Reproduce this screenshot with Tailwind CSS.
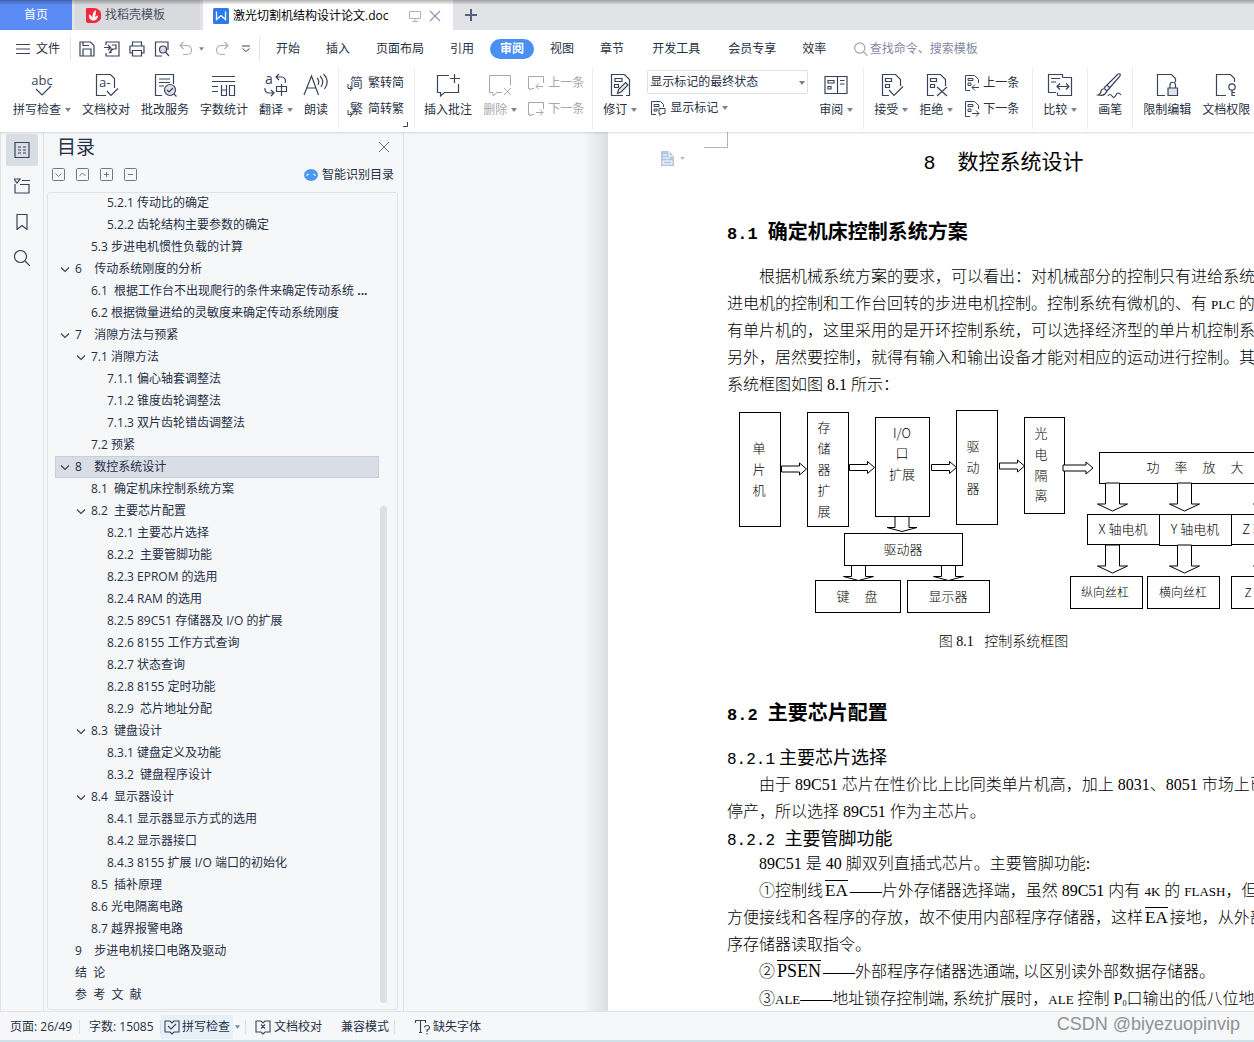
<!DOCTYPE html>
<html lang="zh-CN">
<head>
<meta charset="utf-8">
<meta name="viewport" content="width=device-width, initial-scale=1">
<title>激光切割机结构设计论文.doc</title>
<script src="https://cdn.jsdelivr.net/npm/@tailwindcss/browser@4"></script>
</head>
<body class="h-screen overflow-hidden flex flex-col bg-[#f5f7f9] text-[12px] leading-4 text-[#262f45] font-['Open_Sans','Noto_Sans_CJK_SC',sans-serif] whitespace-nowrap">

<!-- shared icons -->
<svg class="hidden" aria-hidden="true">
  <symbol id="caret" viewBox="0 0 6 4"><path d="M0 0h6L3 4z" fill="#79839b"/></symbol>
  <symbol id="chev" viewBox="0 0 10 10"><path d="M1 3.500l4 4 4-4" fill="none" stroke="#3b4458" stroke-width="1.200"/></symbol>
  <symbol id="doc" viewBox="0 0 24 24"><path d="M10 22.500H3.500V1.500h13l5 5V13M6.500 5.500h6v3h-6zM6.500 11.500h4v3h-4z"/></symbol>
</svg>

<!-- tabs -->
<header class="relative h-[30px] shrink-0 flex bg-[#e1e3e7] overflow-hidden">
  <button class="w-[72px] bg-[#5b8cf6] text-white">首页</button>
  <button class="ml-[3px] w-[125px] bg-[#d8dade] flex items-center pl-[11px] gap-1 text-[#4a5060]">
    <svg class="size-[15px]" viewBox="0 0 15 15"><path d="M1 0h7a7.500 7.500 0 0 1 0 15H2a2 2 0 0 1-2-2V1a1 1 0 0 1 1-1z" fill="#f0293e"/><path d="M7 12.500C4 12 2.500 9.500 3 6.500c2 .5 3 2 3.500 4C6 7 7 4 9.500 2c1 3 0 6-1.500 8.500 1-2 2.500-3 4-3 0 3-2 5-5 5z" fill="#fff"/></svg>
    找稻壳模板
  </button>
  <div class="ml-[3px] w-[250px] bg-white flex items-center pl-[10px] pt-px text-black">
    <svg class="size-4 mr-1" viewBox="0 0 16 16"><rect width="16" height="16" rx="1.500" fill="#2c7be8"/><path d="M3.500 3.500v8L8 7.500l4.500 4v-8" fill="none" stroke="#fff" stroke-width="1.300"/></svg>
    <span>激光切割机结构设计论文.doc</span>
    <svg class="size-[12px] ml-[21px]" viewBox="0 0 12 12" fill="none" stroke="#a9b3cb"><path d="M.5 1.500h11v7H.5zM6 8.500v2.500M3 11.500h6"/></svg>
    <button class="ml-2" aria-label="关闭标签"><svg class="size-[12px]" viewBox="0 0 12 12" stroke="#8c98b5" stroke-width="1.200"><path d="M1 1l10 10M11 1L1 11"/></svg></button>
  </div>
  <button class="ml-3" aria-label="新建标签"><svg class="size-[12px]" viewBox="0 0 12 12" stroke="#56617d" stroke-width="2"><path d="M6 0v12M0 6h12"/></svg></button>
  <div class="absolute inset-x-0 top-0 h-[5px] bg-gradient-to-b from-black/30 to-transparent"></div>
</header>

<!-- menu bar -->
<nav class="h-[37px] shrink-0 flex items-center bg-white pl-4 pt-px">
  <button class="flex items-center gap-1.5"><svg class="size-[14px]" viewBox="0 0 14 14" stroke="#39435a" stroke-width="1.200"><path d="M0 2.500h14M0 7h14M0 11.500h14"/></svg>文件</button>
  <i class="w-px h-6 bg-[#e2e4e8] ml-[10px] mr-2"></i>
  <div class="flex items-center gap-[9px]">
    <button aria-label="保存"><svg class="size-4" viewBox="0 0 16 16" fill="none" stroke="#39435a" stroke-width="1.200"><path d="M1 1h10.500L15 4.500V15H1zM4 15V8h8v7M4 1v3.500h6"/></svg></button>
    <button aria-label="输出为PDF"><svg class="size-4" viewBox="0 0 16 16" fill="none" stroke="#39435a" stroke-width="1.200"><path d="M2 4V1h13v14H2v-3M0 6.500h6M4 4l2.500 2.500L4 9M8 4h4v4H7v4M5 12l4-4"/></svg></button>
    <button aria-label="打印"><svg class="size-4" viewBox="0 0 16 16" fill="none" stroke="#39435a" stroke-width="1.200"><path d="M3.500 5V1h9v4M3.500 12H1V5h14v7h-2.500M3.500 9.500h9V15h-9z"/></svg></button>
    <button aria-label="打印预览"><svg class="size-4" viewBox="0 0 16 16" fill="none" stroke="#39435a" stroke-width="1.200"><path d="M8 15H1.500V1H14v8"/><circle cx="9" cy="8.500" r="3.500" fill="#d9dde5"/><path d="M11.500 11l3.500 4"/></svg></button>
    <button aria-label="撤销" class="flex items-center gap-1.5"><svg class="size-[14px]" viewBox="0 0 14 14" fill="none" stroke="#a9adb6" stroke-width="1.200"><path d="M4.500 0L1 3.500 4.500 7M1 3.500h7a4.500 4.500 0 0 1 0 9H4"/></svg><svg class="w-[5px] h-1"><use href="#caret"/></svg></button>
    <button aria-label="重做" class="ml-0.5"><svg class="size-[14px]" viewBox="0 0 14 14" fill="none" stroke="#a9adb6" stroke-width="1.200"><path d="M9.500 0L13 3.500 9.500 7M13 3.500H6a4.500 4.500 0 0 0 0 9h4"/></svg></button>
    <button aria-label="更多" class="ml-1"><svg class="size-2" viewBox="0 0 8 8" fill="none" stroke="#39435a"><path d="M0 1h8M.5 3.500L4 6.500 7.500 3.500"/></svg></button>
  </div>
  <i class="w-px h-6 bg-[#e2e4e8] ml-[9px] mr-4"></i>
  <div class="flex items-center gap-[26px]">
    <button>开始</button><button>插入</button><button>页面布局</button><button>引用</button>
    <button class="-mx-[10px] px-[10px] h-5 rounded-full bg-[#4990f2] text-white font-bold">审阅</button>
    <button>视图</button><button>章节</button><button class="mx-0.5">开发工具</button><button>会员专享</button><button>效率</button>
  </div>
  <label class="flex items-center gap-0.5 ml-7 flex-1">
    <svg class="size-[14px]" viewBox="0 0 14 14" fill="none" stroke="#9aa4ba" stroke-width="1.200"><circle cx="6" cy="6" r="5.300"/><path d="M10 10l4 4"/></svg>
    <input type="text" aria-label="查找命令" placeholder="查找命令、搜索模板" class="w-full outline-none placeholder:text-[#7f89a3]">
  </label>
</nav>

<!-- ribbon -->
<section class="relative z-10 h-[65px] shrink-0 flex gap-[11px] pl-[13px] bg-white shadow-[0_1px_2px_rgba(0,0,0,0.15)]
  [&>i]:w-px [&>i]:h-[61px] [&>i]:mt-px [&>i]:-mx-px [&>i]:bg-[#ebecef] [&>i]:shrink-0
  [&>button]:pt-[6px] [&>button]:flex [&>button]:flex-col [&>button]:items-center [&>button]:gap-[5px] [&>button]:self-start [&>button]:shrink-0
  [&>button>span]:flex [&>button>span]:items-center [&>button>span]:gap-1
  [&>div]:shrink-0 [&_svg]:fill-none [&_svg]:stroke-[#39435a] [&_svg]:overflow-visible">
  <button><svg class="size-6" viewBox="0 0 24 24"><text x="12" y="12" text-anchor="middle" font-size="13" stroke="none" fill="#39435a">abc</text><path d="M6 16l6 6 9-9" stroke-width="1.200"/></svg><span>拼写检查<svg class="w-1.5 h-1"><use href="#caret" stroke="none"/></svg></span></button>
  <button><svg class="size-6" viewBox="0 0 24 24" stroke-width="1.200"><path d="M12 22.500H2.500V1.500h14l4 4V15M13 18l4 4.500 7-7"/><text x="5" y="14" font-size="13" stroke="none" fill="#39435a">a-</text></svg><span>文档校对</span></button>
  <button><svg class="size-6" viewBox="0 0 24 24" stroke-width="1.200"><path d="M9 22.500H2.500V1.500h18V11M6 6h11M6 9.500h11M6 13h5"/><circle cx="17" cy="17" r="5.500" fill="#dfe3e9"/><path d="M14 17l2 2 4-4M21 21l2.500 2.500"/></svg><span>批改服务</span></button>
  <button><svg class="size-6" viewBox="0 0 24 24" stroke-width="1.200"><path d="M0 3.500h23M0 8.500h23M0 13.500h6M0 18.500h6M9.500 12v10.500h5V12M9.500 17h5M17.500 12.500h5v10h-5z"/></svg><span>字数统计</span></button>
  <button><svg class="size-6" viewBox="0 0 24 24" stroke-width="1.200"><text x="1" y="11" font-size="14" stroke="none" fill="#39435a">a</text><path d="M15 1l-3 3 3 3M12 4h6a4 4 0 0 1 3 6M7 23l3-3-3-3M10 20H5a4 4 0 0 1-4-5M12.500 13.500h10v5h-10zM17.500 11v12"/></svg><span>翻译<svg class="w-1.5 h-1"><use href="#caret" stroke="none"/></svg></span></button>
  <button><svg class="size-6" viewBox="0 0 24 24" stroke-width="1.200"><path d="M0 22L7.500 3l7 19M3 15h9M13 5q3 3 1 7M16 3q5 5 1 11M19.500 1q7 7 1 15"/></svg><span>朗读</span></button>
  <i></i>
  <div class="relative -ml-0.5 pt-[3px]">
    <button class="h-[26px] flex items-center gap-[5px]"><svg class="size-4" viewBox="0 0 16 16"><text x="3" y="12" font-size="13" stroke="none" fill="#39435a">简</text><path d="M1 9v4.500h4M3 11l2 2.500-2 2.500"/></svg>繁转简</button>
    <button class="h-[26px] flex items-center gap-[5px]"><svg class="size-4" viewBox="0 0 16 16"><text x="3" y="12" font-size="13" stroke="none" fill="#39435a">繁</text><path d="M1 9v4.500h4M3 11l2 2.500-2 2.500"/></svg>简转繁</button>
    <svg class="absolute -right-1 bottom-[5px] size-[5px]" viewBox="0 0 5 5"><path d="M4.500 0v4.500H0"/></svg>
  </div>
  <i></i>
  <button class="-ml-px"><svg class="size-6" viewBox="0 0 24 24" stroke-width="1.200"><path d="M13 2.500H1.500v17h3V23l4-3.500h14V11M14 5.500h10M18.500 1v9"/></svg><span>插入批注</span></button>
  <button class="text-[#a3a7b0]"><svg class="size-6" viewBox="0 0 24 24"><path d="M14 19.500H9L5 23v-3.500H1.500v-17h21V12M16 15l7 7M23 15l-7 7" stroke="#a3a7b0"/></svg><span>删除<svg class="w-1.5 h-1"><use href="#caret" stroke="none"/></svg></span></button>
  <div class="pt-[3px] -mr-0.5 text-[#a3a7b0]">
    <button class="h-[26px] flex items-center gap-1"><svg class="size-4" viewBox="0 0 16 16"><path d="M6 13.500H4L2 15v-1.500H.5v-12h15V8M15 11.500H8M11 8.500l-3 3 3 3" stroke="#a3a7b0"/></svg>上一条</button>
    <button class="h-[26px] flex items-center gap-1"><svg class="size-4" viewBox="0 0 16 16"><path d="M6 13.500H4L2 15v-1.500H.5v-12h15V8M8 11.500h7M12 8.500l3 3-3 3" stroke="#a3a7b0"/></svg>下一条</button>
  </div>
  <i></i>
  <button><svg class="size-6" viewBox="0 0 24 24" stroke-width="1.200"><path d="M15 22.500H3.500V1.500h13l5 5v16H18M7 5.500h7v3H7zM6.500 11.500h4v3h-4z"/><path d="M9.500 20.500l1-4 7-7 2.500 2.500-7 7z" fill="#e9ebef"/></svg><span>修订<svg class="w-1.5 h-1"><use href="#caret" stroke="none"/></svg></span></button>
  <div class="pt-[3px] -ml-px">
    <div class="relative">
      <select aria-label="显示状态" class="block appearance-none w-[161px] h-6 border border-[#dcdfe4] rounded-[2px] bg-white pl-0.5 text-[#262f45]"><option>显示标记的最终状态</option></select>
      <svg class="absolute right-[3px] top-[11px] w-1.5 h-1 pointer-events-none"><use href="#caret" stroke="none"/></svg>
    </div>
    <button class="h-[28px] ml-[3px] flex items-center gap-1"><svg class="size-4" viewBox="0 0 16 16"><path d="M6 14.500H1.500V1.500h9l3 3V7M4 4.500h5v2H4zM4 9h3v2H4zM9 8.500h6v5h-3l-2 2v-2H9z"/></svg>显示标记<svg class="w-1.5 h-1"><use href="#caret" stroke="none"/></svg></button>
  </div>
  <button><svg class="size-6" viewBox="0 0 24 24" stroke-width="1.200"><path d="M1 3.500h22v17H1zM13.500 3.500v17M4 7.500h6v2.500H4zM4 13.500h3v2.500H4zM16 7.500h4.500M16 11h4.500"/></svg><span>审阅<svg class="w-1.5 h-1"><use href="#caret" stroke="none"/></svg></span></button>
  <i></i>
  <button><svg class="size-6" viewBox="0 0 24 24" stroke-width="1.200"><use href="#doc"/><path d="M10 17l5 5.500 9-9"/></svg><span>接受<svg class="w-1.5 h-1"><use href="#caret" stroke="none"/></svg></span></button>
  <button><svg class="size-6" viewBox="0 0 24 24" stroke-width="1.200"><use href="#doc"/><path d="M13 14l10 9M23 14l-10 9"/></svg><span>拒绝<svg class="w-1.5 h-1"><use href="#caret" stroke="none"/></svg></span></button>
  <div class="pt-[3px] mr-[3px]">
    <button class="h-[26px] flex items-center gap-[3px]"><svg class="size-4" viewBox="0 0 16 16"><path d="M6 15.500H1.500v-15h9l4 4V8M4 3.500h5v2H4zM4 8h3v2.500H4zM15 12.500H8M11 9.500l-3 3 3 3"/></svg>上一条</button>
    <button class="h-[26px] flex items-center gap-[3px]"><svg class="size-4" viewBox="0 0 16 16"><path d="M6 15.500H1.500v-15h9l4 4V8M4 3.500h5v2H4zM4 8h3v2.500H4zM8 12.500h7M12 9.500l3 3-3 3"/></svg>下一条</button>
  </div>
  <i></i>
  <button><svg class="size-6" viewBox="0 0 24 24" stroke-width="1.200"><path d="M8 19.500H.5v-18h14v3M3 5.500h9M3 9h5M9.500 22.500h14v-18h-9M9.500 22.500V19.500M9 13.500h12M12 10.500l-3 3 3 3M18 10.500l3 3-3 3"/></svg><span>比较<svg class="w-1.5 h-1"><use href="#caret" stroke="none"/></svg></span></button>
  <i></i>
  <button><svg class="size-6" viewBox="0 0 24 24" stroke-width="1.200"><path d="M0 22q3-1 3-4 1-3 4-2 3 2 0 5-2 2-7 1zM6 15L20 1q3-1 2 2L9 18M9 12l3 3M10 23q2-3 4 0t4-1 5 0"/></svg><span>画笔</span></button>
  <i></i>
  <button><svg class="size-6" viewBox="0 0 24 24" stroke-width="1.200"><path d="M10 22.500H2.500V1.500h14l4 4V9"/><path d="M13 15h9.500v7.500H13z" fill="#dfe3e9"/><path d="M15 15v-3a2.700 2.700 0 0 1 5.500 0v3"/></svg><span>限制编辑</span></button>
  <button><svg class="size-6" viewBox="0 0 24 24" stroke-width="1.200"><path d="M12 22.500H2.500V1.500h14l4 4V9"/><circle cx="18" cy="14" r="3.200"/><path d="M18 17v6M18 19.500h3M18 22.500h3"/></svg><span>文档权限</span></button>
</section>

<main class="flex-1 min-h-0 flex overflow-hidden">
  <!-- side rail -->
  <aside class="w-11 shrink-0 border-x border-[#e0e3e8] pl-[5px] pt-0.5 flex flex-col gap-1 [&>button]:size-8 [&>button]:flex [&>button]:items-center [&>button]:justify-center [&_svg]:fill-none [&_svg]:stroke-[#39435a]">
    <button class="bg-[#d9dee5] rounded-[2px]" aria-label="目录"><svg class="size-4" viewBox="0 0 16 16" stroke-width="1.200"><path d="M1 .5h14v15H1zM4 5h3M9 5h3M4 8h3M9 8h3M4 11h3M9 11h3"/></svg></button>
    <button aria-label="章节"><svg class="size-4" viewBox="0 0 16 16" stroke-width="1.200"><path d="M0 1h6L3 5zM8 2.500h8M1 6v9h14V6.500H6"/></svg></button>
    <button aria-label="书签"><svg class="size-4" viewBox="0 0 16 16" stroke-width="1.200"><path d="M3 .5h10v15l-5-4-5 4z"/></svg></button>
    <button aria-label="查找"><svg class="size-4" viewBox="0 0 16 16" stroke-width="1.200"><circle cx="6.500" cy="6.500" r="6"/><path d="M11 11l5 5"/></svg></button>
  </aside>

  <!-- contents panel -->
  <section class="w-[360px] shrink-0 border-r border-[#e0e3e8] flex flex-col pl-[3px] pr-[5px]">
    <div class="flex items-center justify-between h-[30px] pl-[10px] pr-[9px]">
      <h2 class="text-[19px] leading-[30px]">目录</h2>
      <button aria-label="关闭"><svg class="size-[10px]" viewBox="0 0 10 10" stroke="#6b7385"><path d="M0 0l10 10M10 0L0 10"/></svg></button>
    </div>
    <div class="flex items-center h-6 pl-[5px] pr-1 gap-[11px] [&>button>svg]:size-[13px] [&>button>svg]:fill-none [&>button>svg]:stroke-[#6f7787]">
      <button aria-label="展开"><svg viewBox="0 0 13 13"><rect x=".5" y=".5" width="12" height="12" rx="1"/><path d="M3.500 5.500l3 3 3-3"/></svg></button>
      <button aria-label="收起"><svg viewBox="0 0 13 13"><rect x=".5" y=".5" width="12" height="12" rx="1"/><path d="M3.500 8l3-3 3 3"/></svg></button>
      <button aria-label="增加"><svg viewBox="0 0 13 13"><rect x=".5" y=".5" width="12" height="12" rx="1"/><path d="M4 6.500h5M6.500 4v5"/></svg></button>
      <button aria-label="减少"><svg viewBox="0 0 13 13"><rect x=".5" y=".5" width="12" height="12" rx="1"/><path d="M4 6.500h5"/></svg></button>
      <a href="#" class="ml-auto pt-px flex items-center gap-1"><svg class="w-[14px] h-3" viewBox="0 0 14 12"><ellipse cx="7" cy="6" rx="7" ry="6" fill="#4c97f0"/><path d="M2.500 6.500l2-1.500M11.500 6.500l-2-1.500" stroke="#fff" stroke-width="1.300"/></svg>智能识别目录</a>
    </div>
    <div class="relative mt-[6px] mb-px flex-1 min-h-0 overflow-hidden border border-[#dfe2e7] rounded-[3px] pl-[7px] pr-[18px]">
      <ul class="-mt-px [&_a]:flex [&_a]:items-center [&_a]:h-[22px] [&_a]:whitespace-pre [&_svg]:size-[10px] [&_svg]:mr-[5px]">
        <li><a href="#" class="pl-[52px]">5.2.1 传动比的确定</a></li>
        <li><a href="#" class="pl-[52px]">5.2.2 齿轮结构主要参数的确定</a></li>
        <li><a href="#" class="pl-[36px]">5.3 步进电机惯性负载的计算</a></li>
        <li><a href="#" class="pl-[5px]"><svg><use href="#chev"/></svg>6    传动系统刚度的分析</a></li>
        <li><a href="#" class="pl-[36px]">6.1  根据工作台不出现爬行的条件来确定传动系统 <b>...</b></a></li>
        <li><a href="#" class="pl-[36px]">6.2 根据微量进给的灵敏度来确定传动系统刚度</a></li>
        <li><a href="#" class="pl-[5px]"><svg><use href="#chev"/></svg>7    消隙方法与预紧</a></li>
        <li><a href="#" class="pl-[21px]"><svg><use href="#chev"/></svg>7.1 消隙方法</a></li>
        <li><a href="#" class="pl-[52px]">7.1.1 偏心轴套调整法</a></li>
        <li><a href="#" class="pl-[52px]">7.1.2 锥度齿轮调整法</a></li>
        <li><a href="#" class="pl-[52px]">7.1.3 双片齿轮错齿调整法</a></li>
        <li><a href="#" class="pl-[36px]">7.2 预紧</a></li>
        <li><a href="#" class="pl-[5px] bg-[#d9dde5] outline outline-[#c6d0d9] -outline-offset-1" aria-current="true"><svg><use href="#chev"/></svg>8    数控系统设计</a></li>
        <li><a href="#" class="pl-[36px]">8.1  确定机床控制系统方案</a></li>
        <li><a href="#" class="pl-[21px]"><svg><use href="#chev"/></svg>8.2  主要芯片配置</a></li>
        <li><a href="#" class="pl-[52px]">8.2.1 主要芯片选择</a></li>
        <li><a href="#" class="pl-[52px]">8.2.2  主要管脚功能</a></li>
        <li><a href="#" class="pl-[52px]">8.2.3 EPROM 的选用</a></li>
        <li><a href="#" class="pl-[52px]">8.2.4 RAM 的选用</a></li>
        <li><a href="#" class="pl-[52px]">8.2.5 89C51 存储器及 I/O 的扩展</a></li>
        <li><a href="#" class="pl-[52px]">8.2.6 8155 工作方式查询</a></li>
        <li><a href="#" class="pl-[52px]">8.2.7 状态查询</a></li>
        <li><a href="#" class="pl-[52px]">8.2.8 8155 定时功能</a></li>
        <li><a href="#" class="pl-[52px]">8.2.9  芯片地址分配</a></li>
        <li><a href="#" class="pl-[21px]"><svg><use href="#chev"/></svg>8.3  键盘设计</a></li>
        <li><a href="#" class="pl-[52px]">8.3.1 键盘定义及功能</a></li>
        <li><a href="#" class="pl-[52px]">8.3.2  键盘程序设计</a></li>
        <li><a href="#" class="pl-[21px]"><svg><use href="#chev"/></svg>8.4  显示器设计</a></li>
        <li><a href="#" class="pl-[52px]">8.4.1 显示器显示方式的选用</a></li>
        <li><a href="#" class="pl-[52px]">8.4.2 显示器接口</a></li>
        <li><a href="#" class="pl-[52px]">8.4.3 8155 扩展 I/O 端口的初始化</a></li>
        <li><a href="#" class="pl-[36px]">8.5  插补原理</a></li>
        <li><a href="#" class="pl-[36px]">8.6 光电隔离电路</a></li>
        <li><a href="#" class="pl-[36px]">8.7 越界报警电路</a></li>
        <li><a href="#" class="pl-[20px]">9    步进电机接口电路及驱动</a></li>
        <li><a href="#" class="pl-[20px]">结  论</a></li>
        <li><a href="#" class="pl-[20px]">参  考  文  献</a></li>
      </ul>
      <div class="absolute right-[10px] bottom-[6px] w-[7px] h-[497px] rounded-full bg-[#dde1e5]"></div>
    </div>
  </section>

  <!-- document -->
  <div class="flex-1 min-w-0 overflow-hidden flex">
    <div class="w-[204px] shrink-0 bg-gradient-to-r from-[#f5f7f9] from-88% to-[#dcdee1]"></div>
    <article class="relative w-[791px] shrink-0 bg-white px-[119px] text-black text-[16px] leading-[27px] font-['Liberation_Serif','Noto_Sans_CJK_SC',serif] font-light">
      <div class="absolute left-[96px] top-0 w-6 h-4 border-r border-b border-[#b5b5b5]"></div>
      <button class="absolute left-[53px] top-[19px] flex items-center gap-1.5" aria-label="段落布局">
        <svg class="w-[13px] h-[15px]" viewBox="0 0 13 15"><path d="M0 0h8l5 5v10H0z" fill="#b3c8e4"/><path d="M8 0v5h5M2 4h4M2 7h7M2 10h9v3H2z" fill="none" stroke="#fff"/></svg>
        <svg class="w-[5px] h-[3px]" viewBox="0 0 6 4"><path d="M0 0h6L3 4z" fill="#b4b4b4"/></svg>
      </button>
      <h1 class="pt-[13px] leading-[30px] text-[21px] text-center font-['Noto_Sans_CJK_SC',sans-serif] font-normal"><span class="mr-[22px] text-[20px] leading-none font-['Liberation_Mono',monospace]">8</span>数控系统设计</h1>
      <h2 class="mt-[41px] leading-[30px] text-[20px] font-bold font-['Noto_Sans_CJK_SC',sans-serif]"><span class="text-[17px] leading-none font-['Liberation_Mono',monospace]">8.1 </span>确定机床控制系统方案</h2>
      <p class="mt-[17px] indent-8">根据机械系统方案的要求，可以看出：对机械部分的控制只有进给系统的<br>进电机的控制和工作台回转的步进电机控制。控制系统有微机的、有 <span class="text-[13px] leading-none">PLC</span> 的、<br>有单片机的，这里采用的是开环控制系统，可以选择经济型的单片机控制系<br>另外，居然要控制，就得有输入和输出设备才能对相应的运动进行控制。其控<br>系统框图如图 8.1 所示：</p>
      <svg class="mt-0.5 w-[553px] h-[220px]" viewBox="727 400 553 220" font-size="13" text-anchor="middle" font-family="'Noto Sans CJK SC',sans-serif" role="img" aria-label="控制系统框图">
        <defs>
          <path id="down" d="M-7 0V21H-15L0 28 15 21H7V0z"/>
          <path id="short" d="M-7 0V11H-15L0 15 15 11H7V0z"/>
          <path id="right" d="M0-3H18V-6L25 0 18 6V3H0z"/>
        </defs>
        <g fill="#fff" stroke="#000" shape-rendering="crispEdges">
          <path d="M739.500 412.500h41v114h-41zM807.500 412.500h41v114h-41zM875.500 417.500h54v99h-54zM956.500 410.500h41v114h-41zM1024.500 417.500h40v96h-40zM1099.500 452.500h180v31h-180zM844.500 533.500h118v32h-118zM815.500 580.500h85v32h-85zM907.500 580.500h82v32h-82zM1087.500 514.500h72v30h-72zM1159.500 514.500h72v31h-72zM1231.500 514.500h48v30h-48zM1070.500 576.500h72v32h-72zM1147.500 576.500h72v32h-72zM1231.500 576.500h48v32h-48z"/>
        </g>
        <g fill="#fff" stroke="#000">
          <use href="#right" x="781.500" y="469"/><use href="#right" x="849.500" y="467.500"/><use href="#right" x="931.500" y="467.500"/><use href="#right" x="999.500" y="466"/>
          <path d="M1063 465h23v-3l7 6-7 6v-3h-23z"/>
          <use href="#short" x="902" y="516.500"/><use href="#short" x="858.500" y="565.500"/><use href="#short" x="948.500" y="565.500"/>
          <use href="#down" x="1112.500" y="483"/><use href="#down" x="1184.500" y="483"/><use href="#down" x="1268.500" y="483"/>
          <use href="#down" x="1112.500" y="545"/><use href="#down" x="1184.500" y="545"/><use href="#down" x="1268.500" y="545"/>
        </g>
        <text x="759" y="453">单</text><text x="759" y="474">片</text><text x="759" y="495">机</text>
        <text x="824" y="432">存</text><text x="824" y="453">储</text><text x="824" y="474">器</text><text x="824" y="495">扩</text><text x="824" y="516">展</text>
        <text x="902" y="438">I/O</text><text x="902" y="458">口</text><text x="902" y="479">扩展</text>
        <text x="973" y="451">驱</text><text x="973" y="472">动</text><text x="973" y="493">器</text>
        <text x="1041" y="438">光</text><text x="1041" y="459">电</text><text x="1041" y="480">隔</text><text x="1041" y="500">离</text>
        <text x="1153" y="472">功</text><text x="1181" y="472">率</text><text x="1209" y="472">放</text><text x="1237" y="472">大</text>
        <text x="903" y="554">驱动器</text><text x="843" y="601">键</text><text x="871" y="601">盘</text><text x="948" y="601">显示器</text>
        <text x="1123" y="534">X 轴电机</text><text x="1195" y="534">Y 轴电机</text><text x="1267" y="534">Z 轴电机</text>
        <text x="1105" y="597" font-size="12">纵向丝杠</text><text x="1183" y="597" font-size="12">横向丝杠</text><text x="1248" y="597" font-size="12">Z</text>
      </svg>
      <p class="mt-2 text-center text-[14px] whitespace-pre">图 8.1   控制系统框图</p>
      <h2 class="mt-[42px] leading-[30px] text-[20px] font-bold font-['Noto_Sans_CJK_SC',sans-serif]"><span class="text-[17px] leading-none font-['Liberation_Mono',monospace]">8.2 </span>主要芯片配置</h2>
      <h3 class="mt-[17px] leading-[25px] text-[18px] font-normal font-['Noto_Sans_CJK_SC',sans-serif]"><span class="mr-1 text-[16px] leading-none font-['Liberation_Mono',monospace]">8.2.1</span>主要芯片选择</h3>
      <p class="mt-0.5 indent-8">由于 89C51 芯片在性价比上比同类单片机高，加上 8031、8051 市场上已<br>停产，所以选择 89C51 作为主芯片。</p>
      <h3 class="leading-[25px] text-[18px] font-normal font-['Noto_Sans_CJK_SC',sans-serif]"><span class="text-[16px] leading-none font-['Liberation_Mono',monospace]">8.2.2 </span>主要管脚功能</h3>
      <p class="indent-8">89C51 是 40 脚双列直插式芯片。主要管脚功能:</p>
      <p class="indent-8">①控制线<span class="mx-0.5 border-t border-black text-[17px] leading-none font-normal">EA</span>——片外存储器选择端，虽然 89C51 内有 <span class="text-[13px] leading-none">4K</span> 的 <span class="text-[13px] leading-none">FLASH</span>，但为<br>方便接线和各程序的存放，故不使用内部程序存储器，这样<span class="mx-0.5 border-t border-black text-[17px] leading-none font-normal">EA</span>接地，从外部<br>序存储器读取指令。</p>
      <p class="indent-8">②<span class="mx-0.5 border-t border-black text-[18px] leading-none font-normal">PSEN</span>——外部程序存储器选通端, 以区别读外部数据存储器。</p>
      <p class="indent-8">③<span class="text-[13px] leading-none">ALE</span>——地址锁存控制端, 系统扩展时，<span class="text-[13px] leading-none">ALE</span> 控制 P<sub class="text-[8px] leading-none">0</sub>口输出的低八位地址</p>
    </article>
  </div>
</main>

<!-- status bar -->
<footer class="h-[31px] shrink-0 flex items-center border-t border-t-[#dfe2e7] border-b-2 border-b-[#cfe0e8] pl-[10px] pr-[14px] pt-px [&_i]:w-px [&_i]:h-[14px] [&_i]:bg-[#dcdfe5] [&_svg]:fill-none [&_svg]:stroke-[#39435a]">
  <span class="w-[69px]">页面: 26/49</span><i></i>
  <span class="ml-[9px] w-[67px]">字数: 15085</span><i class="ml-1"></i>
  <button class="h-6 bg-[#e8f0fa] flex items-center gap-0.5 px-[3px]"><svg class="size-4" viewBox="0 0 16 16" stroke-width="1.100"><path d="M6 2H1v11h5l2 2 2-2h5V2h-5L8 4zM4 7l3 3 5-5"/></svg>拼写检查</button>
  <svg class="w-[5px] h-1 ml-0.5"><use href="#caret" stroke="none"/></svg><i class="ml-[5px]"></i>
  <button class="ml-[9px] flex items-center gap-[3px]"><svg class="size-4" viewBox="0 0 16 16" stroke-width="1.100"><path d="M6 2H1v11h5l2 2 2-2h5V2h-5L8 4zM6 5.500l4 4M10 5.500l-4 4"/></svg>文档校对</button>
  <span class="ml-[19px]">兼容模式</span><i class="ml-[5px]"></i>
  <button class="ml-5 flex items-center gap-0.5"><svg class="size-4" viewBox="0 0 16 16" stroke-width="1.100"><path d="M.5 4V1.500h10V4M5.500 1.500v12M4 13.500h3M9.500 8.500q0-2 2.500-2t2.500 2-2.500 2.500v2M12 14v1.500"/></svg>缺失字体</button>
  <span class="ml-auto mb-[6px] text-[18px] leading-5 text-[#8f9296] font-['Liberation_Sans',sans-serif]">CSDN @biyezuopinvip</span>
</footer>
</body>
</html>
